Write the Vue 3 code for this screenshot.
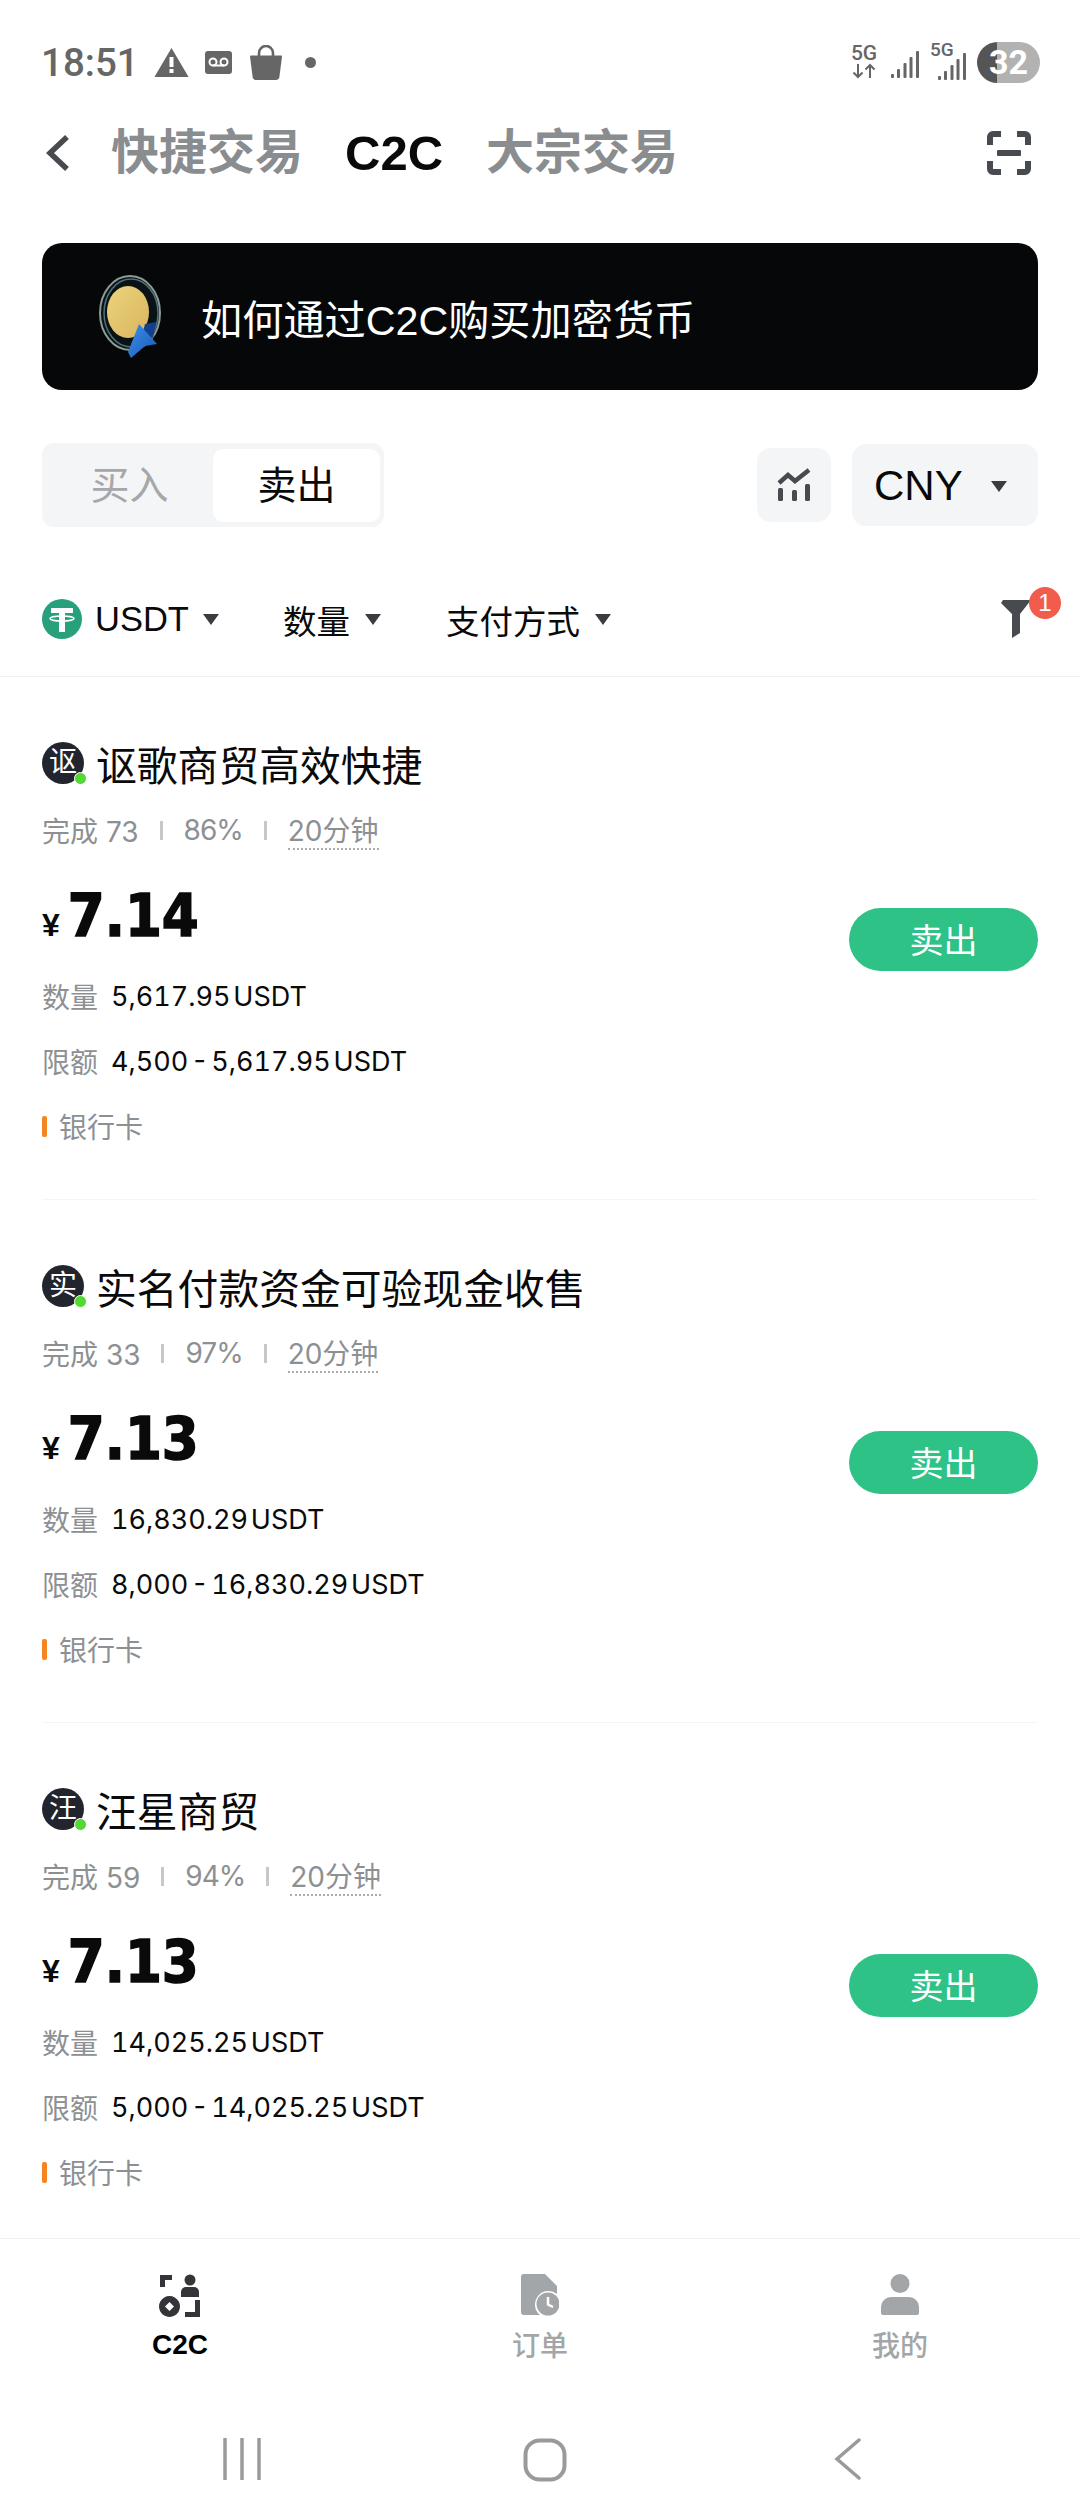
<template>
  <div class="page">
    <div class="status">
      <span class="clock">18:51</span>
      <svg class="st-warn" viewBox="0 0 34 30"><path d="M17 1 L33.500 29 a.5.5 0 0 1-.5 1 H1 a.5.5 0 0 1-.5-1 Z" fill="#666"/><rect x="15" y="10" width="4" height="10" fill="#fff"/><rect x="15" y="22" width="4" height="4" fill="#fff"/></svg>
      <svg class="st-vm" viewBox="0 0 27 23"><rect width="27" height="23" rx="3" fill="#666"/><circle cx="8" cy="11" r="3.500" fill="none" stroke="#fff" stroke-width="2"/><circle cx="19" cy="11" r="3.500" fill="none" stroke="#fff" stroke-width="2"/><path d="M8 14.500H19" stroke="#fff" stroke-width="2"/></svg>
      <svg class="st-bag" viewBox="0 0 32 35"><path d="M9 11V8a7 7 0 0 1 14 0v3" fill="none" stroke="#666" stroke-width="2.600"/><path d="M1 10.500 H31 a1 1 0 0 1 1 1 L29.500 31 a4 4 0 0 1-4 4 H6.500 a4 4 0 0 1-4-4 L0 11.500 a1 1 0 0 1 1-1Z" fill="#666"/></svg>
      <span class="st-dot"></span>
      <div class="st-right">
        <div class="net">
          <span class="net-5g">5G</span>
          <svg class="net-arrows" viewBox="0 0 24 16"><path d="M6 1V14M1.500 9.500L6 14L10.500 9.500M18 15V2M13.500 6.500L18 2L22.500 6.500" fill="none" stroke="#666" stroke-width="2"/></svg>
        </div>
        <svg class="sig" viewBox="0 0 28 27"><g fill="#666"><rect x="0" y="23" width="3" height="4" rx="1"/><rect x="6" y="18" width="3" height="9" rx="1"/><rect x="12.500" y="12" width="3" height="15" rx="1"/><rect x="18.500" y="6" width="3" height="21" rx="1"/><rect x="25" y="0" width="3" height="27" rx="1"/></g></svg>
        <div class="sig2">
          <span class="net-5g small">5G</span>
          <svg class="sig small-sig" viewBox="0 0 28 27"><g fill="#666"><rect x="0" y="23" width="3" height="4" rx="1"/><rect x="6" y="18" width="3" height="9" rx="1"/><rect x="12.500" y="12" width="3" height="15" rx="1"/><rect x="18.500" y="6" width="3" height="21" rx="1"/><rect x="25" y="0" width="3" height="27" rx="1"/></g></svg>
        </div>
        <div class="batt"><span>32</span></div>
      </div>
    </div>

    <div class="topnav">
      <svg class="back" viewBox="0 0 24 38"><path d="M21 3L4 19L21 35" fill="none" stroke="#474a4f" stroke-width="5.500"/></svg>
      <span class="tab">快捷交易</span>
      <span class="tab tab--on">C2C</span>
      <span class="tab">大宗交易</span>
      <svg class="scan" viewBox="0 0 44 44"><g fill="none" stroke="#474a4f" stroke-width="6"><path d="M3 14V6a3 3 0 0 1 3-3H14"/><path d="M30 3H38a3 3 0 0 1 3 3V14"/><path d="M3 30V38a3 3 0 0 0 3 3H14"/><path d="M30 41H38a3 3 0 0 0 3-3V30"/></g><rect x="10" y="19" width="24" height="6" rx="1" fill="#474a4f"/></svg>
    </div>

    <div class="banner">
      <svg class="coin" viewBox="0 0 68 86">
        <defs>
          <linearGradient id="gold" x1="0" y1="0" x2="1" y2="1"><stop offset="0" stop-color="#ecd27e"/><stop offset="1" stop-color="#d9b65c"/></linearGradient>
          <linearGradient id="blue" x1="0" y1="0" x2="1" y2="1"><stop offset="0" stop-color="#3f8fe8"/><stop offset="1" stop-color="#1659b8"/></linearGradient>
        </defs>
        <ellipse cx="32" cy="39" rx="30" ry="37" fill="#0b1215" stroke="#8d9a98" stroke-width="2"/>
        <ellipse cx="33" cy="39" rx="27" ry="34" fill="none" stroke="#4d7378" stroke-width="1.500"/>
        <ellipse cx="30" cy="38" rx="21" ry="26" fill="url(#gold)"/>
        <path d="M47 50L58 48L55 64L44 62Z" fill="#123f8f"/>
        <path d="M41 50L59 70L47 72L33 84L30 78Z" fill="url(#blue)"/>
      </svg>
      <span>如何通过C2C购买加密货币</span>
    </div>

    <div class="tools">
      <div class="seg">
        <span class="seg-item">买入</span>
        <span class="seg-item seg-item--on">卖出</span>
      </div>
      <div class="chart-btn">
        <svg viewBox="0 0 34 34"><path d="M2 15L11 7L18 13L32 2" fill="none" stroke="#474a4f" stroke-width="4.500"/><g fill="#474a4f"><rect x="1" y="20" width="5" height="13" rx="1.500"/><rect x="15" y="22" width="5" height="11" rx="1.500"/><rect x="28" y="16" width="5" height="17" rx="1.500"/></g></svg>
      </div>
      <div class="cur">
        <span>CNY</span>
        <i class="caret caret--cur"></i>
      </div>
    </div>

    <div class="filters">
      <svg class="usdt" viewBox="0 0 40 40"><circle cx="20" cy="20" r="20" fill="#26a17b"/><path d="M9 9H31V14H23V33H17V14H9Z" fill="#fff"/><ellipse cx="20" cy="19.500" rx="12" ry="2.600" fill="none" stroke="#fff" stroke-width="1.500"/></svg>
      <span class="f-usdt">USDT</span><i class="caret"></i>
      <span class="f-txt f-amt">数量</span><i class="caret"></i>
      <span class="f-txt f-pay">支付方式</span><i class="caret"></i>
      <div class="funnel">
        <svg viewBox="0 0 30 38"><path d="M2 0H30L19 14V33L11 38V14L0 3Z" fill="#474a4f"/></svg>
        <span class="badge">1</span>
      </div>
    </div>

    <div class="list">
      <div v-for="ad in ads" :key="ad.name" class="card">
        <div class="card-main">
          <div class="seller">
            <div class="avatar">{{ ad.name[0] }}<i class="online"></i></div>
            <span class="name">{{ ad.name }}</span>
          </div>
          <div class="stats">
            <span>完成 {{ ad.done }}</span>
            <i class="sep"></i>
            <span class="rate">{{ ad.rate }}</span>
            <i class="sep"></i>
            <span class="limit">20分钟</span>
          </div>
          <div class="price"><span class="yen">¥</span><span class="num">{{ ad.price }}</span></div>
          <div class="row"><span class="lbl">数量</span><span class="val">{{ ad.qty }} USDT</span></div>
          <div class="row"><span class="lbl">限额</span><span class="val">{{ ad.min }} - {{ ad.qty }} USDT</span></div>
          <div class="row pay"><i class="pay-bar"></i><span class="lbl">银行卡</span></div>
        </div>
        <div class="sell">卖出</div>
      </div>
    </div>

    <div class="tabbar">
      <div class="tb tb--on">
        <svg viewBox="0 0 42 44"><g fill="#333538"><path d="M1 1H13V6H6V13H1Z"/><circle cx="31" cy="6" r="5.500"/><path d="M22 23V18a5 5 0 0 1 5-5H35a5 5 0 0 1 5 5V23Z"/><path fill-rule="evenodd" d="M10.500 22a10.500 10.500 0 1 0 .01 0ZM10.500 28L15 32.500L10.500 37L6 32.500Z"/><path d="M36 26H41V43H26V38H36Z"/></g></svg>
        <span>C2C</span>
      </div>
      <div class="tb">
        <svg viewBox="0 0 38 42"><path d="M3 0H24L36 12V20A13 13 0 0 0 19 41H3A3 3 0 0 1 0 38V3A3 3 0 0 1 3 0Z" fill="#a3a6a8"/><circle cx="27" cy="30" r="11.500" fill="#a3a6a8"/><path d="M27 23V30.500L32 33" fill="none" stroke="#fff" stroke-width="2.500"/></svg>
        <span>订单</span>
      </div>
      <div class="tb">
        <svg viewBox="0 0 38 42"><circle cx="19" cy="9.500" r="9.500" fill="#a3a6a8"/><path d="M0 39V33A10 10 0 0 1 10 23H28A10 10 0 0 1 38 33V39A2 2 0 0 1 36 41H2A2 2 0 0 1 0 39Z" fill="#a3a6a8"/></svg>
        <span>我的</span>
      </div>
    </div>

    <div class="sysnav">
      <svg class="sys-rec" viewBox="0 0 40 42"><path d="M3 1V41M20 1V41M37 1V41" stroke="#9a9a9a" stroke-width="3.500" stroke-linecap="round"/></svg>
      <svg class="sys-home" viewBox="0 0 44 44"><rect x="2.500" y="2.500" width="39" height="39" rx="14" fill="none" stroke="#9a9a9a" stroke-width="4"/></svg>
      <svg class="sys-back" viewBox="0 0 28 42"><path d="M25 2L3 21L25 40" fill="none" stroke="#9a9a9a" stroke-width="3.500" stroke-linecap="round"/></svg>
    </div>
  </div>
</template>

<script setup>
const ads = [
  { name: '讴歌商贸高效快捷', done: 73, rate: '86%', price: '7.14', qty: '5,617.95', min: '4,500' },
  { name: '实名付款资金可验现金收售', done: 33, rate: '97%', price: '7.13', qty: '16,830.29', min: '8,000' },
  { name: '汪星商贸', done: 59, rate: '94%', price: '7.13', qty: '14,025.25', min: '5,000' }
]
</script>

<style>
html, body { margin: 0; background: #fff; }
</style>

<style scoped>
.page {
  width: 1080px;
  height: 2520px;
  display: flex;
  flex-direction: column;
  overflow: hidden;
  background: #fff;
  color: #0a0a0a;
  font-family: "Liberation Sans", "Noto Sans CJK SC", sans-serif;
}

.status {
  height: 110px;
  flex-shrink: 0;
  display: flex;
  align-items: center;
  padding: 14px 40px 0 41px;
  box-sizing: border-box;
}
.clock {
  font-family: Roboto, sans-serif;
  font-weight: 500;
  font-size: 38.5px;
  color: #666;
  width: 113px;
}
.st-warn { width: 35px; height: 30px; margin-right: 16px; }
.st-vm { width: 27px; height: 23px; margin-right: 18px; }
.st-bag { width: 32px; height: 35px; margin-right: 23px; }
.st-dot { width: 11px; height: 11px; border-radius: 50%; background: #666; }
.st-right { margin-left: auto; display: flex; align-items: center; }
.net { width: 24px; display: flex; flex-direction: column; align-items: center; margin-right: 15px; }
.net-5g { font-family: Roboto, sans-serif; font-size: 21px; line-height: 17px; font-weight: 500; color: #666; }
.net-arrows { width: 24px; height: 16px; margin-top: 1px; }
.sig { width: 28px; height: 27px; margin-right: 11px; margin-top: 4px; }
.sig2 { width: 35px; height: 38px; position: relative; margin-right: 12px; }
.net-5g.small { position: absolute; left: 0; top: -2px; font-size: 19px; }
.small-sig { position: absolute; left: 8px; top: 10px; margin: 0; }
.batt {
  width: 63px;
  height: 41px;
  border-radius: 21px;
  background: linear-gradient(90deg, #555 0 20px, #b2b2b2 20px);
  display: flex;
  align-items: center;
  justify-content: center;
  color: #fff;
  font-family: Roboto, sans-serif;
  font-weight: 700;
  font-size: 34px;
}

.topnav {
  height: 86px;
  flex-shrink: 0;
  display: flex;
  align-items: center;
  padding: 0 49px 0 46px;
}
.back { width: 24px; height: 38px; margin-right: 41px; }
.tab {
  font-size: 48px;
  font-weight: 700;
  color: #8a8d90;
  margin-right: 42px;
  line-height: 60px;
}
.tab--on { color: #0a0a0a; font-size: 49px; margin-right: 43px; }
.scan { width: 44px; height: 44px; margin-left: auto; }

.banner {
  margin: 47px 42px 0;
  height: 147px;
  flex-shrink: 0;
  border-radius: 20px;
  background: #050708;
  display: flex;
  align-items: center;
  color: #fff;
  font-size: 41.2px;
  padding-left: 56px;
  box-sizing: border-box;
}
.coin { width: 68px; height: 86px; margin-right: 35px; }

.tools {
  margin-top: 53px;
  padding: 0 42px;
  height: 84px;
  flex-shrink: 0;
  display: flex;
  align-items: center;
}
.seg {
  width: 342px;
  height: 84px;
  box-sizing: border-box;
  padding: 6px 4px 5px;
  display: flex;
  background: #f3f5f6;
  border-radius: 12px;
}
.seg-item {
  flex: 1;
  text-align: center;
  line-height: 73px;
  font-size: 39px;
  color: #a5a7a9;
  border-radius: 10px;
}
.seg-item--on { flex: 0 0 167px; background: #fff; color: #0a0a0a; }
.chart-btn {
  margin-left: auto;
  width: 74px;
  height: 74px;
  border-radius: 14px;
  background: #f3f5f6;
  display: flex;
  align-items: center;
  justify-content: center;
}
.chart-btn svg { width: 34px; height: 34px; }
.cur {
  margin-left: 21px;
  width: 186px;
  height: 82px;
  border-radius: 14px;
  background: #f3f5f6;
  display: flex;
  align-items: center;
  padding: 2px 0 0 22px;
  box-sizing: border-box;
  font-size: 42px;
}
.caret {
  display: block;
  width: 0;
  height: 0;
  border-left: 8.5px solid transparent;
  border-right: 8.5px solid transparent;
  border-top: 11px solid #3a3c40;
}
.caret--cur { margin-left: 28px; }

.filters {
  height: 150px;
  flex-shrink: 0;
  box-sizing: border-box;
  border-bottom: 1px solid #f0f1f2;
  display: flex;
  align-items: center;
  padding: 35px 42px 0;
}
.usdt { width: 40px; height: 40px; margin-right: 13px; }
.f-usdt { font-size: 34.5px; margin-right: 14px; }
.f-txt { font-size: 33.5px; margin-right: 15px; }
.f-amt { margin-left: 64px; }
.f-pay { margin-left: 65px; }
.funnel { margin-left: auto; position: relative; width: 30px; height: 38px; margin-right: 7px; }
.funnel svg { width: 30px; height: 38px; display: block; }
.badge {
  position: absolute;
  left: 28px;
  top: -13px;
  width: 32px;
  height: 32px;
  border-radius: 50%;
  background: #f25c4d;
  color: #fff;
  font-size: 24px;
  text-align: center;
  line-height: 32px;
}

.list { flex: 1; overflow: hidden; min-height: 0; }
.card {
  height: 523px;
  margin: 0 42px;
  box-sizing: border-box;
  border-bottom: 1px solid #f4f5f6;
  display: flex;
  align-items: flex-start;
  justify-content: space-between;
}
.card-main { display: flex; flex-direction: column; padding-top: 64px; }
.seller { display: flex; align-items: center; height: 44px; }
.avatar {
  position: relative;
  width: 42px;
  height: 42px;
  border-radius: 50%;
  background: #22252e;
  color: #fff;
  font-size: 28px;
  line-height: 42px;
  text-align: center;
  margin-right: 12px;
}
.online {
  position: absolute;
  right: -3px;
  bottom: -1px;
  width: 11px;
  height: 11px;
  border-radius: 50%;
  background: #55d835;
  border: 1px solid #fff;
}
.name { font-size: 40.8px; line-height: 44px; margin-top: 8px; }
.stats {
  margin-top: 30px;
  height: 30px;
  display: flex;
  align-items: center;
  font-size: 28px;
  color: #8d9093;
  font-family: "Inter", "Noto Sans CJK SC", sans-serif;
}
.sep { width: 3px; height: 19px; background: #c6c8ca; margin: 0 21px; }
.rate { letter-spacing: -1px; }
.limit { border-bottom: 2px dotted #a9abad; line-height: 34px; height: 34px; margin-top: 4px; }
.price { margin-top: 38px; height: 65px; display: flex; align-items: baseline; }
.yen { font-size: 32px; font-weight: 700; margin-right: 8px; }
.num {
  font-family: "DejaVu Sans Condensed", "DejaVu Sans", sans-serif;
  font-stretch: condensed;
  font-size: 59px;
  line-height: 65px;
  font-weight: 700;
  -webkit-text-stroke: 1.5px #0a0a0a;
}
.row { margin-top: 35px; height: 30px; display: flex; align-items: center; font-size: 28px; }
.price + .row { margin-top: 33px; }
.lbl { color: #8d9093; }
.val {
  margin-left: 13px;
  font-family: Inter, sans-serif;
  color: #0a0a0a;
  font-size: 27px;
  font-variant-numeric: tabular-nums;
  word-spacing: -4.5px;
}
.pay-bar { width: 5px; height: 21px; border-radius: 2px; background: #f5861f; margin-right: 12px; }
.sell {
  align-self: center;
  margin-top: 2px;
  width: 189px;
  height: 63px;
  border-radius: 32px;
  background: #2fc286;
  color: #fff;
  font-size: 34px;
  text-align: center;
  line-height: 67px;
}

.tabbar {
  height: 154px;
  flex-shrink: 0;
  box-sizing: border-box;
  border-top: 1px solid #f1f3f3;
  background: #fff;
  display: grid;
  grid-template-columns: repeat(3, 360px);
  padding-top: 35px;
}
.tb { display: flex; flex-direction: column; align-items: center; font-size: 28px; color: #a3a6a8; font-weight: 500; }
.tb svg { width: 38px; height: 42px; }
.tb span { line-height: 32px; margin-top: 15px; }
.tb--on { color: #000; font-weight: 700; }
.tb--on svg { width: 42px; height: 44px; }
.tb--on span { margin-top: 11px; }

.sysnav {
  height: 128px;
  flex-shrink: 0;
  display: flex;
  align-items: flex-start;
  padding: 46px 0 0 222px;
  box-sizing: border-box;
}
.sys-rec { width: 40px; height: 42px; }
.sys-home { width: 44px; height: 44px; margin-left: 261px; }
.sys-back { width: 28px; height: 42px; margin-left: 267px; }
</style>
